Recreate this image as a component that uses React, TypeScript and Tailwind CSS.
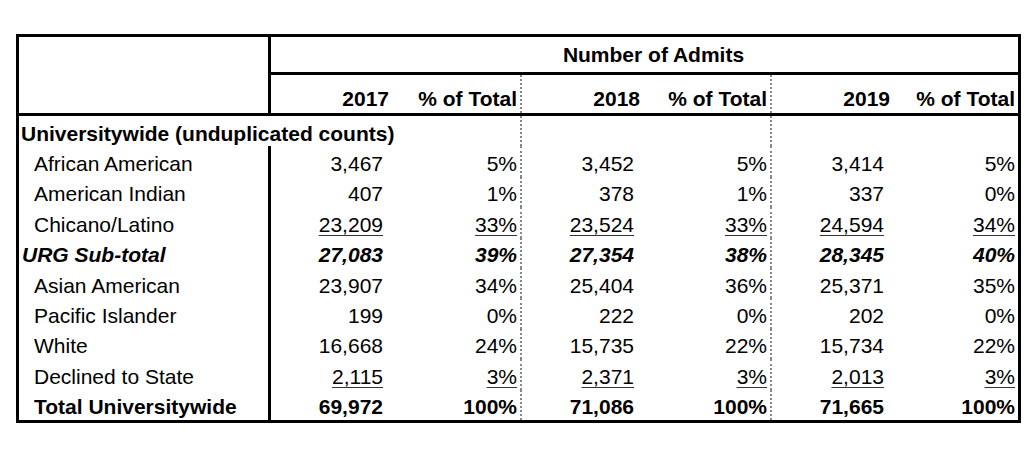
import React from "react";

type Row = {
  label: string;
  vals: string[];
  kind: "normal" | "under" | "urg" | "total";
};

const rows: Row[] = [
  { label: "African American", vals: ["3,467", "5%", "3,452", "5%", "3,414", "5%"], kind: "normal" },
  { label: "American Indian", vals: ["407", "1%", "378", "1%", "337", "0%"], kind: "normal" },
  { label: "Chicano/Latino", vals: ["23,209", "33%", "23,524", "33%", "24,594", "34%"], kind: "under" },
  { label: "URG Sub-total", vals: ["27,083", "39%", "27,354", "38%", "28,345", "40%"], kind: "urg" },
  { label: "Asian American", vals: ["23,907", "34%", "25,404", "36%", "25,371", "35%"], kind: "normal" },
  { label: "Pacific Islander", vals: ["199", "0%", "222", "0%", "202", "0%"], kind: "normal" },
  { label: "White", vals: ["16,668", "24%", "15,735", "22%", "15,734", "22%"], kind: "normal" },
  { label: "Declined to State", vals: ["2,115", "3%", "2,371", "3%", "2,013", "3%"], kind: "under" },
  { label: "Total Universitywide", vals: ["69,972", "100%", "71,086", "100%", "71,665", "100%"], kind: "total" },
];

const cols = "grid grid-cols-[252px_122px_129px_122px_128px_122px_124px]";
const dotted = "border-r-2 border-dotted border-[#888]";

function Cell({ i, text, kind }: { i: number; text: string; kind: Row["kind"] }) {
  const isPct = i % 2 === 1;
  const border = i === 1 || i === 3 ? dotted : "";
  const pad = isPct ? "pr-[3px]" : "pr-[10px]";
  const weight =
    kind === "urg" ? "font-bold italic" : kind === "total" ? "font-bold" : "";
  return (
    <div className={`h-[30.4px] flex items-center justify-end pt-[4px] leading-none ${pad} ${border} ${weight}`}>
      <span className={kind === "under" ? "underline decoration-1 underline-offset-[3px] decoration-[#333]" : ""}>
        {text}
      </span>
    </div>
  );
}

export default function App() {
  return (
    <div
      className="bg-white w-[1036px] h-[463px] text-black text-[21px]"
      style={{ fontFamily: '"Liberation Sans", Arial, sans-serif' }}
    >
      <div className="pt-[34px] pl-[16px]">
        <div className="w-[1005px] border-[3px] border-black">
          {/* header */}
          <div className={`${cols} border-b-[3px] border-black`}>
            <div className="row-span-2 border-r-[3px] border-black" />
            <div className="col-span-6 h-[38px] border-b-[3px] border-black flex items-center justify-center pl-[18px] font-bold leading-none">
              Number of Admits
            </div>
            {["2017", "% of Total", "2018", "% of Total", "2019", "% of Total"].map((t, i) => (
              <div
                key={i}
                className={`h-[38px] flex items-end justify-end pb-[4px] font-bold leading-none ${
                  i % 2 === 1 ? "pr-[3px]" : "pr-[4px]"
                } ${i === 1 || i === 3 ? dotted : ""}`}
              >
                {t}
              </div>
            ))}
          </div>
          {/* body */}
          <div className={cols}>
            <div className={`col-span-3 h-[30.4px] flex items-center pt-[4px] pl-[2px] font-bold leading-none whitespace-nowrap ${dotted}`}>
              Universitywide (unduplicated counts)
            </div>
            <div className="h-[30.4px]" />
            <div className={`h-[30.4px] ${dotted}`} />
            <div className="h-[30.4px]" />
            <div className="h-[30.4px]" />
            {rows.map((r) => (
              <React.Fragment key={r.label}>
                <div
                  className={`h-[30.4px] flex items-center pt-[4px] leading-none whitespace-nowrap border-r-[3px] border-black ${
                    r.kind === "urg"
                      ? "pl-[3px] font-bold italic"
                      : r.kind === "total"
                      ? "pl-[15px] font-bold"
                      : "pl-[15px]"
                  }`}
                >
                  {r.label}
                </div>
                {r.vals.map((v, i) => (
                  <Cell key={i} i={i} text={v} kind={r.kind} />
                ))}
              </React.Fragment>
            ))}
          </div>
        </div>
      </div>
    </div>
  );
}
